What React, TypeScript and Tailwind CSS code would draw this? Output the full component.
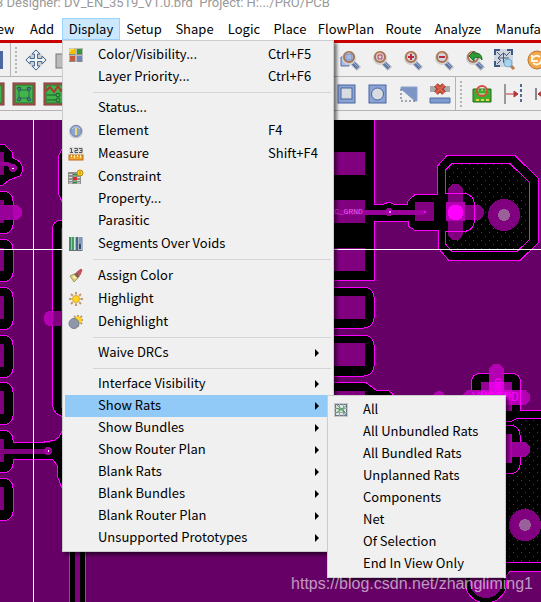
import React from 'react';
import { clsx } from 'clsx';

interface MenuEntry {
  label: string;
  shortcut?: string;
  icon?: React.ReactNode;
  submenu?: boolean;
  active?: boolean;
}

const PaletteIcon = () => (
  <svg width="16" height="16" viewBox="0 0 16 16">
    <rect x="1" y="1" width="14" height="14" fill="#b9b9b9" />
    <rect x="2" y="2" width="5" height="5" fill="#f0c000" />
    <rect x="9" y="2" width="5" height="5" fill="#2f9a37" />
    <rect x="2" y="9" width="5" height="5" fill="#c65a3c" />
    <rect x="9" y="9" width="5" height="5" fill="#6f86c4" />
    <path d="M2 2h4M2 2v3" stroke="#fff08a" fill="none" />
    <path d="M1 7.500h6M9 7.500h5M1 14.500h6M9 14.500h5" stroke="#8c8c8c" />
  </svg>
);

const InfoIcon = () => (
  <svg width="16" height="16" viewBox="0 0 16 16">
    <circle cx="8" cy="8.500" r="7" fill="#c9c9cc" />
    <circle cx="8" cy="8" r="5.500" fill="#8ea2d0" stroke="#7485b0" />
    <path d="M4 6q4-4 8 0" stroke="#c3cde8" fill="none" />
    <rect x="7" y="5" width="2" height="7" fill="#e6df70" />
  </svg>
);

const MeasureIcon = () => (
  <svg width="16" height="16" viewBox="0 0 16 16">
    <path d="M1 1h14v7H1z" fill="#ddd" />
    <g stroke="#555" fill="none">
      <path d="M2 2.500h1.500v4M2 6.500h3M6.500 2.500h3v2h-2.500v2h3M11 2.500h3v4h-3M12 4.500h2" />
    </g>
    <rect x="1" y="9" width="14" height="5" fill="#f0a22c" stroke="#bd6d17" />
    <path d="M3.500 9v2M6.500 9v3M9.500 9v2M12.500 9v3" stroke="#fff1ae" />
  </svg>
);

const ConstraintIcon = () => (
  <svg width="16" height="16" viewBox="0 0 16 16">
    <rect x="0" y="3" width="13" height="12" fill="#8f8f8f" />
    <path d="M1 5.500h3M1 8.500h3M1 11.500h3M9 5.500h3M9 8.500h3M9 11.500h3M1 14h3M9 14h3" stroke="#dedede" />
    <rect x="5" y="4" width="4" height="11" fill="#7fa384" />
    <rect x="5" y="8" width="4" height="3" fill="#e02a2a" />
    <path d="M5 5.500h4M5 13.500h4" stroke="#36864a" />
    <circle cx="12" cy="4" r="3" fill="#ffd21d" stroke="#b98a12" />
    <path d="M12 2.500v3" stroke="#b07d00" />
  </svg>
);

const SegmentsIcon = () => (
  <svg width="16" height="16" viewBox="0 0 16 16">
    <rect x="1" y="1" width="14" height="14" fill="#aab5c2" />
    <rect x="1" y="1" width="2" height="13" fill="#4a8a6a" />
    <rect x="4" y="1" width="2" height="13" fill="#3f9e62" />
    <rect x="6" y="1" width="1" height="13" fill="#d6ecd9" />
    <rect x="8" y="1" width="2" height="13" fill="#4c678f" />
    <rect x="11" y="1" width="3" height="7" fill="#8298bd" />
    <rect x="11" y="8" width="2" height="5" fill="#36486f" />
    <path d="M1 14.500h13" stroke="#687079" />
  </svg>
);

const BrushIcon = () => (
  <svg width="16" height="16" viewBox="0 0 16 16">
    <path d="M2 8l4-2 4 4-4 4z" fill="#dccf71" stroke="#a39a6a" />
    <path d="M4 9l3-1 1 3" fill="#fffbd0" />
    <path d="M6 6l3-2 3 4-2 2z" fill="#8a5a50" />
    <path d="M9 4l4-3 1 1-2 5z" fill="#d34b58" stroke="#b5525d" />
  </svg>
);

const SunIcon = () => (
  <svg width="16" height="16" viewBox="0 0 16 16">
    <path d="M8 1v14M1 8h14M3 3l10 10M13 3L3 13" stroke="#c09a72" strokeWidth="2" />
    <circle cx="8" cy="8" r="4.500" fill="#f0f0f0" />
    <circle cx="8" cy="8" r="3.500" fill="#ffd51a" stroke="#dfa43c" />
  </svg>
);

const DimSunIcon = () => (
  <svg width="16" height="16" viewBox="0 0 16 16">
    <path d="M10 1v12M4 6h11M6 2l8 8M14 2L6 10" stroke="#c09a72" strokeWidth="2" />
    <circle cx="10" cy="6" r="3.500" fill="#ffd51a" />
    <circle cx="6" cy="9.500" r="5" fill="#8f98a9" stroke="#747e92" />
  </svg>
);

const RatsIcon = () => (
  <svg width="16" height="16" viewBox="0 0 16 16">
    <rect x="1" y="1" width="14" height="14" fill="#c8c8c8" />
    <rect x="2.500" y="2.500" width="11" height="11" fill="#dfe5e3" stroke="#6b768c" />
    <path d="M6.500 2v12M10.500 2v12M2 6.500h12M2 10.500h12" stroke="#9aa3b0" />
    <path d="M3 6l5 2 5-4M3 11l4-3M8 7l5 6M4 3l8 7" stroke="#4f9d58" fill="none" />
  </svg>
);

const menuGroups: MenuEntry[][] = [
  [
    { label: 'Color/Visibility...', shortcut: 'Ctrl+F5', icon: <PaletteIcon /> },
    { label: 'Layer Priority...', shortcut: 'Ctrl+F6' },
  ],
  [
    { label: 'Status...' },
    { label: 'Element', shortcut: 'F4', icon: <InfoIcon /> },
    { label: 'Measure', shortcut: 'Shift+F4', icon: <MeasureIcon /> },
    { label: 'Constraint', icon: <ConstraintIcon /> },
    { label: 'Property...' },
    { label: 'Parasitic' },
    { label: 'Segments Over Voids', icon: <SegmentsIcon /> },
  ],
  [
    { label: 'Assign Color', icon: <BrushIcon /> },
    { label: 'Highlight', icon: <SunIcon /> },
    { label: 'Dehighlight', icon: <DimSunIcon /> },
  ],
  [{ label: 'Waive DRCs', submenu: true }],
  [
    { label: 'Interface Visibility', submenu: true },
    { label: 'Show Rats', submenu: true, active: true },
    { label: 'Show Bundles', submenu: true },
    { label: 'Show Router Plan', submenu: true },
    { label: 'Blank Rats', submenu: true },
    { label: 'Blank Bundles', submenu: true },
    { label: 'Blank Router Plan', submenu: true },
    { label: 'Unsupported Prototypes', submenu: true },
  ],
];

const ratsMenu: MenuEntry[] = [
  { label: 'All', icon: <RatsIcon /> },
  { label: 'All Unbundled Rats' },
  { label: 'All Bundled Rats' },
  { label: 'Unplanned Rats' },
  { label: 'Components' },
  { label: 'Net' },
  { label: 'Of Selection' },
  { label: 'End In View Only' },
];

const menuBar = [
  { label: 'View', width: 'w-11' },
  { label: 'Add', width: 'w-10' },
  { label: 'Display', width: 'w-[58px]', open: true },
  { label: 'Setup', width: 'w-12' },
  { label: 'Shape', width: 'w-[53px]' },
  { label: 'Logic', width: 'w-[46px]' },
  { label: 'Place', width: 'w-[46px]' },
  { label: 'FlowPlan', width: 'w-[66px]' },
  { label: 'Route', width: 'w-[49px]' },
  { label: 'Analyze', width: 'w-[60px]' },
  { label: 'Manufacture', width: 'w-[92px]' },
];

function MenuRow({ item }: { item: MenuEntry }) {
  return (
    <button
      role="menuitem"
      className={clsx(
        'flex w-full items-center text-left whitespace-nowrap',
        item.icon ? 'h-[23px]' : 'h-[22px]',
        item.active && 'bg-[#91c9f7]'
      )}
    >
      <span className="flex w-[33px] shrink-0 pl-[3px]">{item.icon}</span>
      <span className="flex-1 pb-0.5">{item.label}</span>
      {item.shortcut && <span className="w-[63px] pb-0.5">{item.shortcut}</span>}
      {item.submenu && (
        <svg className="mr-3" width="4" height="8" viewBox="0 0 4 8">
          <path d="M0 0l4 4-4 4z" fill="#000" />
        </svg>
      )}
    </button>
  );
}

/* Toolbar */

function ToolButton({ label, children }: { label: string; children: React.ReactNode }) {
  return (
    <button aria-label={label} className="flex h-6 w-[31px] shrink-0 items-center justify-center">
      <svg width="24" height="24" viewBox="0 0 24 24" fill="none">
        {children}
      </svg>
    </button>
  );
}

const Grip = () => <div className="h-[26px] w-0 shrink-0 border-l-2 border-dotted border-[#b4b4b4]" />;
const Divider = () => <div className="h-full w-px shrink-0 bg-[#b4b4b4]" />;

const Lens = () => (
  <>
    <path d="M15 15l6 6" stroke="#c4c4c4" strokeWidth="6" />
    <path d="M14 14l6 6" stroke="#5f78a8" strokeWidth="4" />
    <path d="M15 14l5 5" stroke="#a1b5da" />
    <circle cx="11" cy="10" r="6" stroke="#d0d0d0" strokeWidth="2" />
    <circle cx="11" cy="9" r="5" fill="#d0d6e2" stroke="#a97350" strokeWidth="2" />
    <path d="M7 7q2-3 5-2" stroke="#dcb08e" />
  </>
);

const BoardTile = ({ wave }: { wave?: boolean }) => (
  <>
    <rect x="1" y="1" width="22" height="22" fill="#c25a5a" stroke="#783030" />
    <rect x="3" y="3" width="18" height="18" fill="#43b44a" stroke="#276b30" />
    {wave ? (
      <>
        <path d="M3 9l4-4 4 5 4-6 3 5 3-3" stroke="#a63b34" strokeWidth="2" />
        <path d="M4 13h9M4 18h9" stroke="#1b5932" />
        <circle cx="15" cy="13" r="2" stroke="#1b5932" />
        <circle cx="15" cy="18" r="2" stroke="#1b5932" />
      </>
    ) : (
      <>
        <path d="M6 6l3 2h6l3-2M6 18l3-2h6l3 2M7 9v6M17 9v6" stroke="#2a6a55" />
        <path d="M5 6l3-1 1 3-2 1zM19 6l-3-1-1 3 2 1zM5 18l3 1 1-3-2-1zM19 18l-3 1-1-3 2-1z" fill="#4d7c8d" stroke="#255b56" />
      </>
    )}
  </>
);

function Toolbars() {
  return (
    <div className="bg-[#f0f0f0] pb-[9px]">
      <div className="flex h-[34px] items-center border-b border-[#b4b4b4]">
        <div className="flex h-full w-[334px] shrink-0 items-center">
          <div className="mr-[7px] h-[18px] w-[3px] bg-[#4d67a0]" />
          <Divider />
          <div className="ml-1" />
          <Grip />
          <div className="ml-[3px] flex">
            <ToolButton label="Move">
              <path d="M12 1l11 11-11 11L1 12z" fill="#ccc" />
              <path d="M12 2l4 4h-2.500v4.500H18V8l4 4-4 4v-2.500h-4.500V18H16l-4 4-4-4h2.500v-4.500H6V16l-4-4 4-4v2.500h4.500V6H8z" fill="#eef4fb" stroke="#486b91" />
            </ToolButton>
            <ToolButton label="Copy">
              <rect x="1" y="6" width="18" height="14" fill="#bbb" stroke="#777" />
            </ToolButton>
          </div>
        </div>
        <div className="flex">
          <ToolButton label="Zoom window">
            <path d="M3 9h8v9H3z" fill="#a6bae2" stroke="#536fa7" />
            <Lens />
            <path d="M8 6h6v6H8z" fill="#a6bae2" stroke="#7790c0" />
          </ToolButton>
          <ToolButton label="Zoom fit"><Lens /><path d="M9 7h4v4H9z" stroke="#c73845" strokeWidth="1" /></ToolButton>
          <ToolButton label="Zoom in"><Lens /><path d="M11 6v6M8 9h6" stroke="#c3283a" strokeWidth="2" /></ToolButton>
          <ToolButton label="Zoom out"><Lens /><path d="M8 9h6" stroke="#c3283a" strokeWidth="2" /></ToolButton>
          <ToolButton label="Zoom previous">
            <Lens />
            <path d="M7 8l5-5v3c5-2 8 1 8 6-2-3-4-3-8-2v3z" fill="#2e9b35" stroke="#19702a" />
          </ToolButton>
          <ToolButton label="Center view">
            <path d="M1 1h19v18H1z" fill="#cfd6df" />
            <path d="M2 7V2h5M14 2h5v5M2 13v5h5" stroke="#3f5b81" strokeWidth="2" />
            <path d="M4 4l4 4M17 4l-4 4M4 16l4-4M5 10h11M10.500 5v10M8 7l2.500-2L13 7M7 8l-2 2 2 2" stroke="#3f5b81" />
            <path d="M17 17l4 4" stroke="#b77b47" strokeWidth="3" />
            <circle cx="15" cy="15" r="4" fill="#a4d3f0" stroke="#7fa9c7" />
          </ToolButton>
          <ToolButton label="Redraw">
            <circle cx="13" cy="12" r="9" fill="#f2a64b" stroke="#bc762b" />
            <path d="M8 14c-1-5 4-8 8-5M8 7v6h6M18 10c0 6-5 8-9 5" stroke="#fff6df" strokeWidth="2" />
          </ToolButton>
        </div>
      </div>
      <div className="flex h-[34px] items-center border-b border-[#b4b4b4]">
        <div className="flex w-[334px] shrink-0 items-center overflow-hidden">
          <div className="-ml-[23px] flex">
            <ToolButton label="Layers"><BoardTile /></ToolButton>
            <ToolButton label="Ratsnest"><BoardTile /></ToolButton>
            <ToolButton label="Signal"><BoardTile wave /></ToolButton>
          </div>
        </div>
        <div className="-ml-[3px] flex">
          <ToolButton label="Rectangle">
            <rect x="3" y="3" width="17" height="18" fill="#8ca4d5" stroke="#49659e" />
            <rect x="6" y="6" width="11" height="11" fill="#d8dce1" stroke="#49659e" />
          </ToolButton>
          <ToolButton label="Circle">
            <rect x="3" y="3" width="17" height="18" fill="#8ca4d5" stroke="#49659e" />
            <circle cx="11.500" cy="12" r="6" fill="#d8dce1" stroke="#49659e" />
          </ToolButton>
          <ToolButton label="Polygon">
            <path d="M4 5h16v14H18L4 7z" fill="#7c94c6" stroke="#8ba1ce" />
            <path d="M4 7v12h14" stroke="#4b5770" strokeDasharray="2 2" />
          </ToolButton>
          <ToolButton label="Delete shape">
            <path d="M2 4h20v6H2z" fill="#aaa" />
            <path d="M2 16h20v5H2z" fill="#7f9bd0" stroke="#516ea5" />
            <path d="M8 3l8 8M16 3l-8 8" stroke="#963828" strokeWidth="5" />
            <path d="M8 3l8 8M16 3l-8 8" stroke="#dc5d49" strokeWidth="3" />
          </ToolButton>
        </div>
        <Divider />
        <div className="ml-1" />
        <Grip />
        <div className="ml-1 flex">
          <ToolButton label="Board view">
            <path d="M3 7h18v13H3z" fill="#3fac32" stroke="#206c1c" />
            <path d="M6 18h3M11 18h3M16 18h3" stroke="#e9d444" strokeWidth="2" />
            <path d="M7 8h2M11 8h2M15 8h2M8 12h8" stroke="#e5f5ba" />
            <circle cx="12" cy="9" r="5" stroke="#d3503c" strokeWidth="2" />
          </ToolButton>
          <ToolButton label="Spacing">
            <path d="M4 2v20" stroke="#999" strokeWidth="2" />
            <path d="M5 12h12M13 9l4 3-4 3z" fill="#b83436" stroke="#b83436" />
            <path d="M20 2v20" stroke="#536d98" strokeWidth="2" strokeDasharray="3 2" />
          </ToolButton>
          <ToolButton label="Clearance">
            <path d="M4 6v12" stroke="#888" strokeWidth="2" />
            <path d="M6 12h14M10 9l-4 3 4 3z" fill="#b83436" stroke="#b83436" />
          </ToolButton>
        </div>
      </div>
    </div>
  );
}

/* Board */

const leftPads = [191, 239, 287, 335, 382, 430, 478];

function Board() {
  return (
    <svg
      className="absolute inset-0 h-full w-full"
      viewBox="0 120 541 482"
      preserveAspectRatio="xMinYMin slice"
      shapeRendering="crispEdges"
      fill="none"
    >
      <defs>
        <pattern id="voids" x="445" y="165" width="8" height="8" patternUnits="userSpaceOnUse">
          <rect width="8" height="8" fill="#000" />
          <rect x="4" y="3" width="1" height="1" fill="#a000a0" />
          <rect x="0" y="7" width="1" height="1" fill="#a000a0" />
        </pattern>
      </defs>
      <rect y="120" width="541" height="482" fill="#660066" />

      {/* left connector column */}
      <path d="M-2 144H4L12 152V157L20 162Q25 169 20 176L9 180L3 185H-2z" fill="#000" stroke="#f0f" />
      <rect x="0" y="152" width="4" height="23" fill="#800080" />
      <path d="M0 164H8L13 168" stroke="#990099" strokeWidth="4" />
      <circle cx="13" cy="168" r="4" fill="#990099" />
      <rect x="12" y="168" width="2" height="1" fill="#fff" />
      {leftPads.map((y) => (
        <g key={y}>
          <rect x="-20" y={y + 0.5} width="33" height="42" rx="9" fill="#000" stroke="#f0f" />
          <rect x="0" y={y + 9} width="4" height="23" fill="#800080" />
        </g>
      ))}
      <rect x="-8" y="205" width="30" height="15" rx="7" fill="#b300b3" />
      <rect x="0" y="205" width="13" height="15" fill="#990099" />
      <path d="M11 443H48L57 440L64 430V490L60 484L57 474V464L53 460H11z" fill="#000" />
      <path d="M13 442.500H42L55 440L59 437L62 431M13 459.500H44L53 460L57 465V475L62 488" stroke="#f0f" />
      <rect y="449" width="48" height="5" fill="#800080" />
      <circle cx="48" cy="451" r="4" fill="#a000a0" />
      <rect x="48" y="450" width="1" height="2" fill="#fff" />
      <path d="M64 145L58 157V193L64 206z" fill="#000" stroke="#f0f" />
      <path d="M64 220H60Q52 222 52.500 230V405Q53 414 64 417z" fill="#000" stroke="#f0f" />
      <path d="M61.500 228V408" stroke="#800080" />
      <rect x="44" y="311" width="24" height="15" rx="6" fill="#b300b3" />
      <rect x="53" y="311" width="10" height="15" fill="#800080" />
      <path d="M69 540H85V610H69z" fill="#000" stroke="#f0f" />
      <rect x="75" y="540" width="5" height="62" fill="#800080" />

      {/* middle connector column */}
      <rect x="320" y="110" width="54" height="170" fill="#000" stroke="#f0f" />
      <rect x="320" y="287" width="54" height="41" rx="10" fill="#000" stroke="#f0f" />
      <rect x="320" y="335" width="54" height="41" rx="10" fill="#000" stroke="#f0f" />
      <path d="M320 382H365L376 390H388L396 397V410H320z" fill="#000" stroke="#f0f" />
      <path d="M320 152H365V175H320zM320 200H365V223H320zM320 248H365V271H320zM320 296H365V319H320zM320 343H365V366H320zM320 391H365V414H320z" fill="#800080" />

      {/* fanout into the upper right pad */}
      <path
        d="M374 204.500H383L389 202L394 204.500H407L408 201L415 194.500H437.500V166L447 155.500H515L538 178V243L520 260.500H449L438 248V230.500H415L408 226V221.500H374"
        fill="#000"
        stroke="#f0f"
      />
      <rect x="373" y="205" width="3" height="16" fill="#000" />
      <path
        d="M445.500 193.500V170L452 163.500H510L529 182V240L517 251.500H452L445.500 244V231.500H465Q474 230 474.500 220V205Q474 195 465 193.500z"
        fill="url(#voids)"
        stroke="#f0f"
      />
      <path d="M446 194H465Q474 195 474 205V220Q474 230 465 231H446z" fill="#000" />
      <rect x="333" y="210" width="92" height="5" fill="#990099" />
      <circle cx="389" cy="212" r="4" fill="#a000a0" />
      <rect x="415" y="202" width="19" height="19" fill="#800080" />
      <rect x="415" y="210" width="10" height="5" fill="#a000a0" />
      <rect x="389" y="211" width="2" height="2" fill="#ff80ff" />
      <rect x="424" y="211" width="2" height="2" fill="#f0f" />
      <rect x="448" y="184" width="15" height="56" rx="7" fill="#800080" />
      <rect x="448" y="205" width="36" height="15" rx="7" fill="#800080" />
      <rect x="446" y="202" width="19" height="19" fill="#b300b3" />
      <rect x="448" y="205" width="15" height="15" rx="6" fill="#f0f" />
      <path d="M446 193.500H465Q474 195 474.500 205V220Q474 230 465 231.500H446" stroke="#f0f" />
      <circle cx="504" cy="215" r="16" fill="#800080" />
      <circle cx="504" cy="215" r="6" fill="#996099" />
      <text x="334" y="214" fill="#e060e0" className="font-['Liberation_Mono'] text-[8px]">C_GRND</text>

      {/* lower right pads */}
      <rect x="471.500" y="373.500" width="49" height="50" rx="8" fill="#000" stroke="#f0f" />
      <rect x="481" y="382" width="31" height="30" fill="#990099" />
      <rect x="489" y="364" width="15" height="50" rx="7" fill="#b300b3" />
      <rect x="463" y="390" width="67" height="15" rx="7" fill="#b300b3" />
      <rect x="481" y="390" width="31" height="15" fill="#d000d0" />
      <rect x="489" y="382" width="15" height="24" fill="#e000e0" />
      <circle cx="439" cy="397" r="6" fill="#b300b3" />
      <text x="472" y="401" fill="#f0f" className="font-['Liberation_Mono'] text-[13px]">VMSGND</text>
      <text transform="translate(501 394) rotate(-90)" fill="#f0f" className="font-['Liberation_Mono'] text-[9px]">GND</text>
      <path d="M506 410.500H545V562.500H500V411z" fill="#000" />
      <path d="M520.500 390V410.500H545M500 562.500H545" stroke="#f0f" />
      <path d="M500 421H512L517 418.500H545V562H500z" fill="url(#voids)" />
      <path d="M506 421H512L517 418.500H545" stroke="#f0f" />
      <rect x="480" y="425.500" width="40" height="48" rx="9" fill="#000" stroke="#f0f" />
      <rect x="480" y="442" width="50" height="15" rx="7" fill="#990099" />
      <rect x="500" y="434" width="12" height="29" fill="#b300b3" />
      <circle cx="525" cy="525" r="16" fill="#800080" />
      <circle cx="525" cy="525" r="6" fill="#996099" />
      <path d="M500 563H545V571H510L506 578V585L500 592z" fill="#000" />
      <circle cx="486" cy="582" r="21" fill="#000" stroke="#f0f" />
      <circle cx="486" cy="582" r="16" fill="#800080" />
      <path d="M545 571.500H510L506 576V582" stroke="#f0f" />

      {/* crosshair */}
      <path d="M33.500 120V1200M0 249.500H1200" stroke="#fff" />
    </svg>
  );
}

export default function App() {
  return (
    <div className="relative flex min-h-screen flex-col overflow-hidden bg-white font-['Noto_Sans_CJK_SC','Noto_Sans',sans-serif] text-[13px] leading-4 text-black">
      <header className="h-[18px] overflow-hidden whitespace-pre">
        <h1 className="-mt-[5px] -ml-[4px] font-[Roboto,sans-serif] text-[#999]">3 Designer: DV_EN_3519_V1.0.brd  Project: H:.../PRO/PCB</h1>
      </header>
      <nav className="flex h-[25px] overflow-hidden border-b-[3px] border-[#c80000]">
        <div className="-ml-[22px] flex shrink-0">
          {menuBar.map((item) => (
            <button
              key={item.label}
              className={clsx(
                'flex shrink-0 items-center justify-center pb-px',
                item.width,
                item.open && 'border border-[#99d1ff] bg-[#cce8ff]'
              )}
            >
              {item.label}
            </button>
          ))}
        </div>
      </nav>
      <Toolbars />
      <main className="relative flex-1">
        <Board />
      </main>

      <div
        role="menu"
        className="absolute top-[40px] left-[62px] w-[272px] border border-[#ccc] bg-[#f0f0f0] p-0.5 shadow-[3px_3px_3px_rgba(0,0,0,0.5)]"
      >
        {menuGroups.map((group, i) => (
          <div key={i}>
            {i > 0 && (
              <div className="py-1 pl-7">
                <hr className="border-[#d4d4d4]" />
              </div>
            )}
            {group.map((item) => (
              <MenuRow key={item.label} item={item} />
            ))}
          </div>
        ))}
      </div>

      <div
        role="menu"
        className="absolute top-[395px] left-[327px] w-[179px] border border-[#ccc] bg-[#f0f0f0] p-0.5 shadow-[3px_3px_3px_rgba(0,0,0,0.5)]"
      >
        {ratsMenu.map((item) => (
          <MenuRow key={item.label} item={item} />
        ))}
      </div>

      <p className="absolute right-2 bottom-2 font-['Liberation_Sans',sans-serif] text-base leading-5 text-white/60">
        https://blog.csdn.net/zhangliming1
      </p>
    </div>
  );
}
